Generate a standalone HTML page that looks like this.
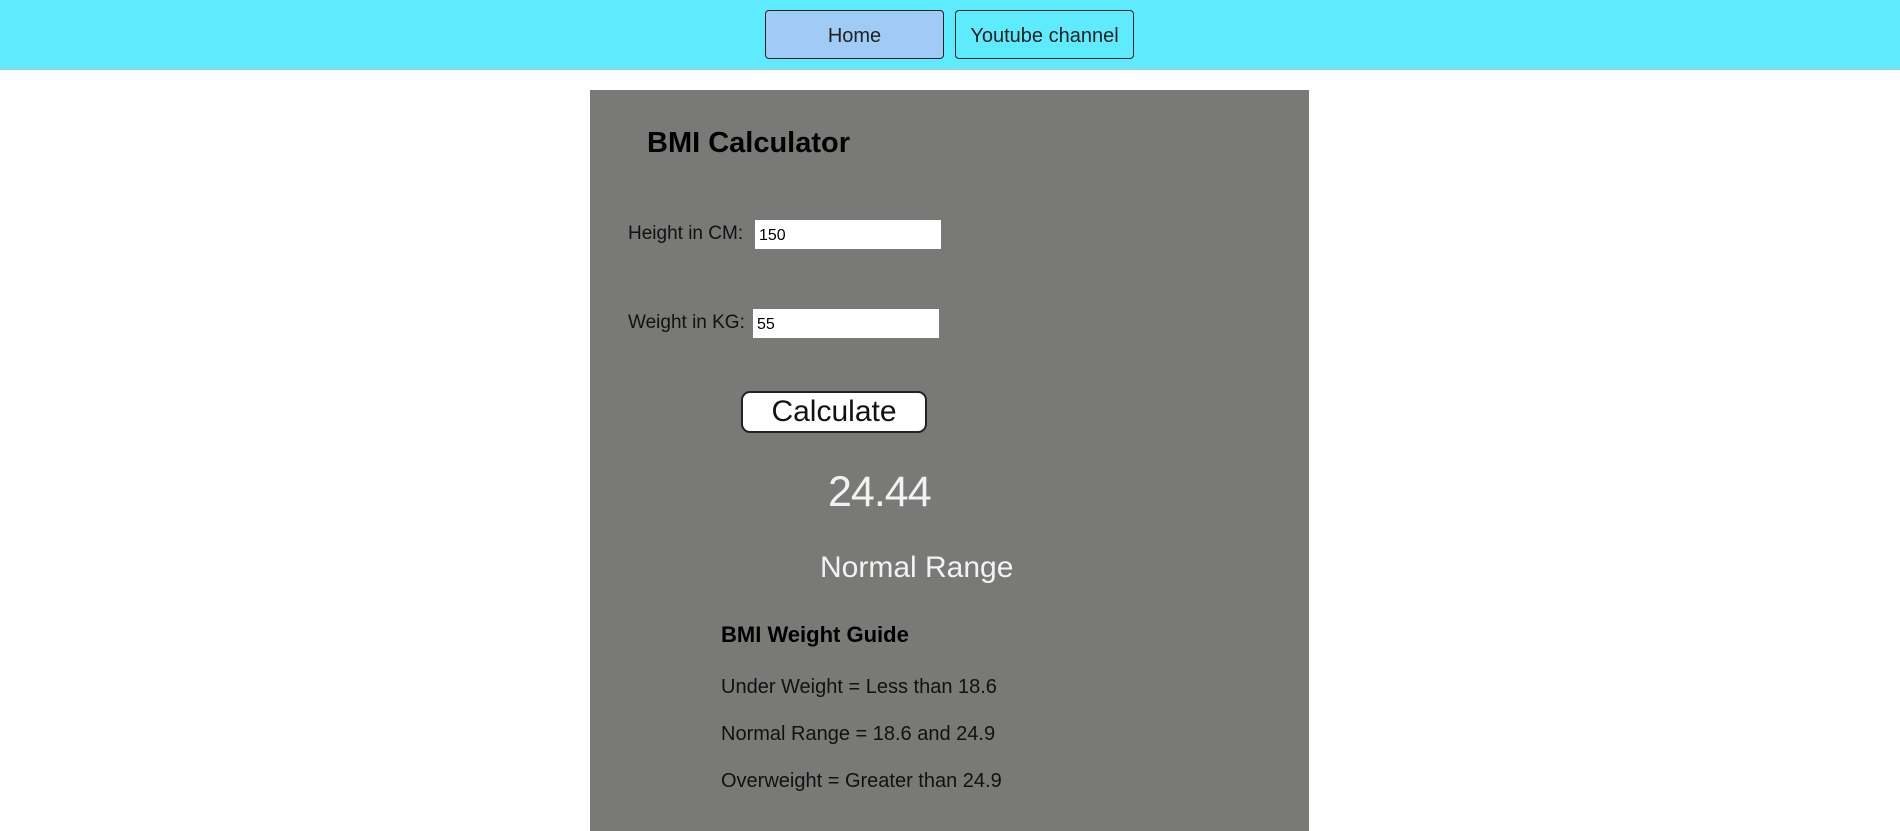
<!DOCTYPE html>
<html><head><style>
*{margin:0;padding:0;box-sizing:border-box}
body{width:1900px;height:831px;overflow:hidden;background:#fff;font-family:"Liberation Sans",sans-serif;position:relative}
.nav{position:absolute;left:0;top:0;width:1900px;height:70px;background:#5eebfe;border-bottom:1px solid #b8c8cc}
.btn{position:absolute;top:10px;height:49px;border:1px solid #222;border-radius:4px;font-size:20px;color:#222;text-align:center;line-height:50px}
.panel{position:absolute;left:590px;top:90px;width:719px;height:741px;background:#797977}
.t{position:absolute;line-height:1;white-space:nowrap}
.inp{position:absolute;background:#fff;width:186px;height:29px;font-size:16px;color:#000;padding-left:4px;line-height:31px}
</style></head><body>
<div class="nav">
<div class="btn" style="left:765px;width:179px;background:#a0cbf7">Home</div>
<div class="btn" style="left:955px;width:179px;background:#5eebfe">Youtube channel</div>
</div>
<div class="panel"></div>
<div class="t" style="left:647px;top:129px;font-size:29px;font-weight:bold;color:#000">BMI Calculator</div>
<div class="t" style="left:628px;top:224px;font-size:19px;color:#111">Height in CM:</div>
<div class="inp" style="left:755px;top:220px">150</div>
<div class="t" style="left:628px;top:313px;font-size:19px;color:#111">Weight in KG:</div>
<div class="inp" style="left:753px;top:309px">55</div>
<div style="position:absolute;left:741px;top:391px;width:186px;height:42px;background:#fff;border:2px solid #222;border-radius:9px;font-size:30px;text-align:center;line-height:38px;color:#111">Calculate</div>
<div class="t" style="left:828px;top:471px;font-size:43px;color:#f2f2f2;letter-spacing:-1px">24.44</div>
<div class="t" style="left:820px;top:553px;font-size:30px;color:#f2f2f2">Normal Range</div>
<div class="t" style="left:721px;top:624px;font-size:22px;font-weight:bold;color:#000">BMI Weight Guide</div>
<div class="t" style="left:721px;top:677px;font-size:20px;color:#111">Under Weight = Less than 18.6</div>
<div class="t" style="left:721px;top:724px;font-size:20px;color:#111">Normal Range = 18.6 and 24.9</div>
<div class="t" style="left:721px;top:771px;font-size:20px;color:#111">Overweight = Greater than 24.9</div>
</body></html>
